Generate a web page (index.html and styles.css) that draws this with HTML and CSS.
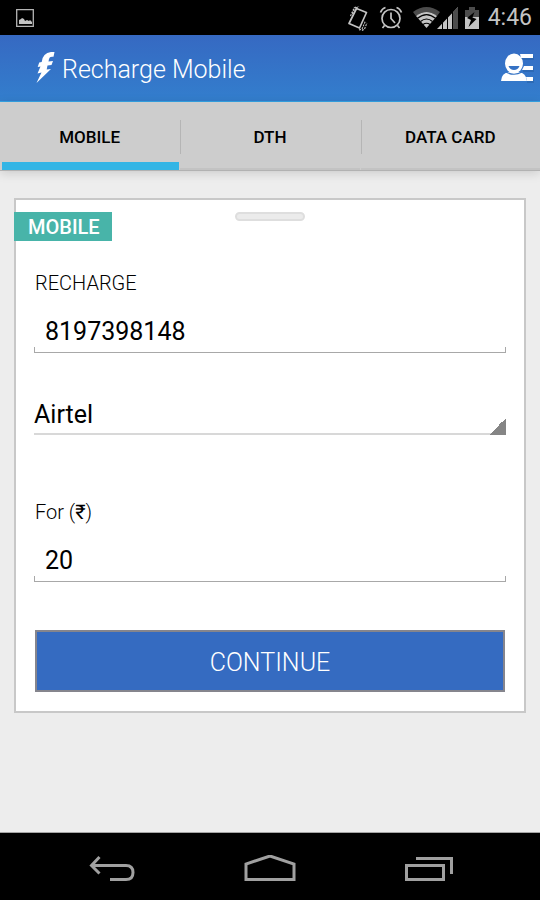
FILE: index.html
```html
<!DOCTYPE html>
<html lang="en">
<head>
<meta charset="utf-8">
<meta name="viewport" content="width=device-width, initial-scale=1">
<title>Recharge Mobile</title>
<link rel="stylesheet" href="styles.css">
</head>
<body>
<div class="status">
  <svg width="18" height="18" viewBox="0 0 18 18"><path d="M.7.7h16.6v16.6H.7z" fill="none" stroke="#b4b4b4" stroke-width="1.3"/><path d="M3 15v-4l2-1 1-1 2 1 1 2 2-1 2 1 1-1 2 2v2z" fill="#c4c4c4"/></svg>
  <div class="status-right">
    <svg width="22" height="26" viewBox="0 0 22 26" fill="none" stroke="#c4c4c4"><path d="M9.500 3.500l10 4-7 15.500-10.500-4.500z" stroke-width="1.700" stroke-linejoin="round"/><path d="M3.500 11l4-9M5.500 9l3.500-8M9 3l3-1.500M12 25l3-1 3.500-8M15 25.500l2.500-1.500 2.500-6" stroke-width="1.100" stroke-dasharray="2 1"/></svg>
    <svg width="24" height="24" viewBox="0 0 24 24" fill="none" stroke="#c4c4c4" stroke-width="1.7"><circle cx="12" cy="12.500" r="9"/><path d="M12 6.500v6l4 4.500M1.500 6.500q1.500-4 5-5M17.500 1.500q3.500 1 5 5M5.500 19.500l-2 2.500M18.500 19.500l2 2.500"/></svg>
    <span class="signals">
      <svg width="46" height="24" viewBox="0 0 46 24"><path d="M0 6Q13.500-4 27 6l-3 4Q13.500 2 3 10z" fill="#4c4c4c"/><path d="M3 10Q13.500 2 24 10L13.500 22z" fill="#c4c4c4"/><path d="M4.500 12.300q9-7.500 18 0M7.500 15.500q6-5 12 0M10 18.500q3.500-2.500 7 0" fill="none" stroke="#000" stroke-width="1.200"/><path d="M45 1v22H24z" fill="#c4c4c4"/><path d="M40 6.200L45 1v22h-5z" fill="#4c4c4c"/><path d="M29.500 14v9M34.500 9v14M39.500 4v19" stroke="#000" stroke-width="1"/></svg>
      <svg width="16" height="24" viewBox="0 0 16 24"><path d="M1 4h4V1h6v3h4v8H1z" fill="#4c4c4c"/><path d="M1 11h14v12H1z" fill="#c4c4c4"/><path d="M10.500 6L3 12l4 2-2.500 7 8-8-4-1.500z" fill="#000"/></svg>
    </span>
    <span class="clock">4:46</span>
  </div>
</div>

<header class="appbar">
  <svg width="20" height="32" viewBox="0 0 20 32" fill="#fff"><path d="M18.500 0L17.500 4.800Q13.500 4 13 7l-.5 2.500 4.500-.5-1.500 4-4 .5-.8 4 4.300-.5L.5 31l5-10.500-4 1 3-7-2.800.5 1.500-4.500 2.500-.5Q7-1 18.500 0z"/></svg>
  <h1>Recharge Mobile</h1>
  <button class="account" type="button" aria-label="Account menu">
    <svg width="34" height="30" viewBox="0 0 34 30"><g fill="#235a9e" opacity=".45"><path d="M21 3h13v4H21zM23 15h11v4H23zM27 26h7v4h-7z"/></g><g fill="#fff"><path d="M20 1h13v4H21zM24 13h9v4H22zM26 24h7v4h-6z"/><ellipse cx="14" cy="10.500" rx="9" ry="10"/><path d="M1 28q.5-8 8-9h10q7 1 8 9z"/></g><path d="M8.500 13h11q-1.500 4-5.500 4t-5.500-4z" fill="#3572c4"/><path d="M6 19q8 4.500 16 0" fill="none" stroke="#3473c4" stroke-width="1.200"/></svg>
  </button>
</header>

<nav class="tabs">
  <button class="tab active" type="button">MOBILE</button>
  <button class="tab" type="button">DTH</button>
  <button class="tab" type="button">DATA CARD</button>
</nav>

<main>
  <form class="card">
    <div class="card-head">
      <h2>MOBILE</h2>
      <span class="handle"></span>
    </div>
    <label for="number">RECHARGE</label>
    <input id="number" class="field" type="text" inputmode="tel" value="8197398148">
    <select class="operator" aria-label="Operator"><option>Airtel</option></select>
    <label for="amount">For (<span class="rupee">₹</span>)</label>
    <input id="amount" class="field" type="text" inputmode="numeric" value="20">
    <button class="continue" type="button">CONTINUE</button>
  </form>
</main>

<footer class="navbar">
  <button type="button" aria-label="Back"><svg width="48" height="28" viewBox="0 0 48 28" fill="none" stroke="#a0a0a0" stroke-width="3"><path d="M4 10.500h35q7 0 7 7t-7 7H23M12.500 2L4.500 10.500l8 8"/></svg></button>
  <button type="button" aria-label="Home"><svg width="52" height="28" viewBox="0 0 52 28" fill="none" stroke="#a0a0a0" stroke-width="3"><path d="M2 24.500V9l24-8 24 8v15.500z"/></svg></button>
  <button type="button" aria-label="Recent apps"><svg width="50" height="28" viewBox="0 0 50 28" fill="none" stroke="#a0a0a0" stroke-width="3"><path d="M2.500 10.500h37v14h-37zM12 3.500h35.500V19"/></svg></button>
</footer>
</body>
</html>
```
FILE: styles.css
```css
* { box-sizing: border-box; }
body {
  margin: 0;
  min-height: 100vh;
  display: flex;
  flex-direction: column;
  background: #ededed;
  color: #000;
  font-family: Roboto, "Liberation Sans", sans-serif;
}
svg { display: block; flex: none; }
button, input, select {
  margin: 0;
  padding: 0;
  border: 0;
  border-radius: 0;
  background: none;
  color: inherit;
  font: inherit;
}
h1, h2 { margin: 0; }

.status {
  height: 35px;
  padding: 0 8px 0 16px;
  display: flex;
  align-items: center;
  justify-content: space-between;
  background: #000;
}
.status-right { display: flex; align-items: center; gap: 10px; }
.signals { display: flex; gap: 5px; }
.clock { margin-left: -2px; color: #c4c4c4; font-size: 23px; line-height: 36px; }

.appbar {
  height: 67px;
  padding: 0 6px 0 36px;
  display: flex;
  align-items: center;
  gap: 6px;
  background: linear-gradient(#3669c2, #337ecd);
  border-bottom: 1px solid #35a4e6;
}
.appbar h1 { flex: 1; padding-top: 4px; color: #fff; font-size: 25px; font-weight: 300; line-height: 32px; }
.account { cursor: pointer; }

.tabs {
  height: 69px;
  display: grid;
  grid-template-columns: repeat(3, 1fr);
  gap: 1px;
  background: #cdcdcd;
  border-bottom: 1px solid #b2b2b2;
  box-shadow: 0 2px 10px rgba(0, 0, 0, 0.15);
}
.tab {
  padding-top: 2px;
  font-size: 17px;
  font-weight: 500;
  background:
    linear-gradient(#b5b5b5, #b5b5b5) left 18px / 1px 34px no-repeat,
    linear-gradient(#c3c3c3, #c3c3c3) left bottom / 100% 2px no-repeat;
}
.tab.active { background: linear-gradient(#33b5e5, #33b5e5) 2px bottom / 100% 8px no-repeat; }

main { flex: 1; padding: 27px 14px; }
.card {
  display: flex;
  flex-direction: column;
  padding: 12px 18px 19px;
  background: #fff;
  border: 2px solid #c8c8c8;
}
.card-head {
  display: grid;
  grid-template-columns: 1fr auto 1fr;
  margin: 0 -20px 27px;
}
.card-head h2 {
  justify-self: start;
  padding: 1px 12px 0 14px;
  background: #48b4a9;
  color: #fff;
  font-size: 20px;
  font-weight: 500;
  line-height: 28px;
}
.handle {
  width: 70px;
  height: 9px;
  border: 2px solid #dedede;
  border-radius: 5px;
  background: #ebebeb;
}
label { padding-left: 1px; font-size: 20px; font-weight: 300; line-height: 30px; }
.rupee { font-weight: 400; }
.field {
  width: 100%;
  height: 48px;
  margin-top: 7px;
  padding: 4px 11px 0;
  font-size: 25px;
  background:
    linear-gradient(#a8a8a8, #a8a8a8) left bottom / 1px 6px no-repeat,
    linear-gradient(#a8a8a8, #a8a8a8) right bottom / 1px 6px no-repeat,
    linear-gradient(#a8a8a8, #a8a8a8) left bottom / 100% 1px no-repeat;
}
.operator {
  appearance: none;
  width: 100%;
  height: 48px;
  margin: 34px 0 62px;
  padding-top: 7px;
  font-size: 25px;
  background:
    linear-gradient(135deg, transparent 50%, #858585 50%) right bottom / 17px 17px no-repeat,
    linear-gradient(#d8d8d8, #d8d8d8) left bottom / 100% 2px no-repeat;
}
.continue {
  height: 62px;
  margin: 48px 1px 0;
  padding-top: 2px;
  border: 2px solid #85858d;
  background: #356bc1;
  color: #fff;
  font-size: 25px;
  font-weight: 300;
}

.navbar {
  height: 68px;
  padding: 4px 32px 0;
  display: grid;
  grid-template-columns: repeat(3, 1fr);
  background: #000;
  border-top: 1px solid #a5a5a5;
}
.navbar button { display: grid; place-items: center; }
```
